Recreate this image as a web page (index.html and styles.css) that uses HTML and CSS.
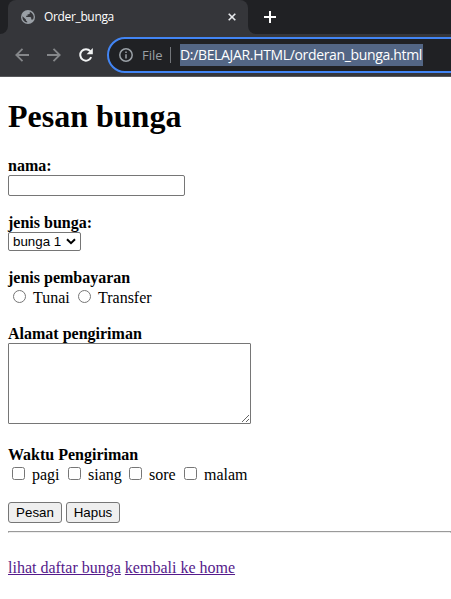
FILE: index.html
```
<!DOCTYPE html>
<html lang="id">
<head>
<meta charset="utf-8">
<title>Order_bunga</title>
<link rel="stylesheet" href="styles.css">
</head>
<body>
<header class="browser">
  <div class="tabs">
    <div class="tab-edge"></div>
    <div class="tab">
      <svg class="globe" width="14" height="14" viewBox="0 0 14 14"><circle cx="7" cy="7" r="7" fill="#9aa0a6"/><path d="M1.5 6.2 L4.9 9.4 V10.4 L6.2 11.4 V12.6 A5.6 5.6 0 0 1 1.5 6.2Z M8.8 1.7 A5.6 5.6 0 0 1 12 9.6 L10.8 9.4 H10.2 V7.8 L9.4 7 H5.2 V5.7 H6.6 V4.3 H8 L8.8 3.5Z" fill="#35363a"/></svg>
      <span class="tab-title">Order_bunga</span>
      <svg class="close" width="8" height="8" viewBox="0 0 8 8"><path d="M.7 .7 7.3 7.3M7.3 .7 .7 7.3" stroke="#e8eaed" stroke-width="1.6"/></svg>
    </div>
    <div class="newtab"><svg width="12" height="12" viewBox="0 0 12 12"><path d="M6 0V12M0 6H12" stroke="#fff" stroke-width="2"/></svg></div>
  </div>
  <div class="toolbar">
    <svg class="nav back" width="14" height="14" viewBox="0 0 14 14"><path d="M14 7H1.5M7.5 .8 1.3 7l6.2 6.2" fill="none" stroke="#85878a" stroke-width="1.8"/></svg>
    <svg class="nav forward" width="14" height="14" viewBox="0 0 14 14"><path d="M0 7H12.5M6.5 .8 12.7 7l-6.2 6.2" fill="none" stroke="#85878a" stroke-width="1.8"/></svg>
    <svg class="nav reload" width="14" height="14" viewBox="0 0 14 14"><path d="M12.2 9.2A5.7 5.7 0 1 1 11.3 3.2" fill="none" stroke="#f1f3f4" stroke-width="2"/><path d="M13.8 0V6.2H7.6Z" fill="#f1f3f4"/></svg>
    <div class="address">
      <svg width="14" height="14" viewBox="0 0 14 14"><circle cx="7" cy="7" r="6.2" fill="none" stroke="#9aa0a6" stroke-width="1.5"/><path d="M7 6.2V10.4M7 3.5V5" stroke="#9aa0a6" stroke-width="1.5"/></svg>
      <span class="scheme">File</span>
      <span class="divider"></span>
      <span class="url">D:/BELAJAR.HTML/orderan_bunga.html</span>
    </div>
  </div>
</header>
<main>
  <h1>Pesan bunga</h1>
  <form>
    <div class="field name">
      <label for="nama">nama:</label>
      <input id="nama" class="text" type="text">
    </div>
    <div class="field kind">
      <label for="jenis">jenis bunga:</label>
      <div class="select-wrap">
        <select id="jenis"><option>bunga 1</option></select>
        <svg class="chevron" width="10" height="7" viewBox="0 0 10 7"><path d="M1 1.2 5 5.2 9 1.2" fill="none" stroke="#000" stroke-width="2"/></svg>
      </div>
    </div>
    <div class="field payment">
      <label>jenis pembayaran</label>
      <div class="options">
        <input type="radio" name="bayar"><span class="o-tunai">Tunai</span>
        <input type="radio" name="bayar"><span>Transfer</span>
      </div>
    </div>
    <div class="field location">
      <label for="alamat">Alamat pengiriman</label>
      <textarea id="alamat"></textarea>
    </div>
    <div class="field time">
      <label>Waktu Pengiriman</label>
      <div class="options checks">
        <input type="checkbox"><span class="o-pagi">pagi</span>
        <input type="checkbox"><span class="o-siang">siang</span>
        <input type="checkbox"><span class="o-sore">sore</span>
        <input type="checkbox"><span>malam</span>
      </div>
    </div>
    <div class="buttons"><button type="button">Pesan</button><button type="button">Hapus</button></div>
  </form>
  <hr>
  <nav class="links"><a href="#">lihat daftar bunga</a><a href="#">kembali ke home</a></nav>
</main>
</body>
</html>
```
FILE: styles.css
```
* { box-sizing: border-box; }
body { margin: 0; height: 599px; overflow: hidden; background: #fff; color: #000; font: 16px/18px "Liberation Serif", serif; }
svg { display: block; flex: none; }
.browser { height: 77px; background: #35363a; border-bottom: 1px solid #57585b; font-family: "Open Sans", sans-serif; }
.tabs { display: flex; height: 34px; background: #35363a; }
.tab-edge { width: 8px; background: #202124; border-bottom-right-radius: 8px; }
.tab { display: flex; align-items: center; width: 240px; padding: 0 12px 0 13px; background: linear-gradient(#202124, #202124) 0 0 / 100% 8px no-repeat, #35363a; position: relative; isolation: isolate; }
.tab::before { content: ""; position: absolute; inset: 0; z-index: -1; border-radius: 8px 8px 0 0; background: #35363a; }
.tab-title { margin-left: 9px; color: #fff; font-size: 12px; white-space: nowrap; letter-spacing: -.35px; }
.close { margin-left: auto; }
.newtab { flex: 1; padding: 11px 0 0 16px; background: #202124; border-bottom-left-radius: 8px; }
.toolbar { display: flex; align-items: center; height: 42px; padding-left: 15px; overflow: hidden; }
.nav { margin-right: 18px; }
.reload { margin-right: 14px; }
.address { display: flex; align-items: center; flex: none; width: 370px; height: 36px; border: 2px solid #4285f4; border-radius: 18px; background: #202124; padding-left: 10px; }
.scheme { width: 20px; margin-left: 9px; color: #9aa0a6; font-size: 13px; white-space: nowrap; }
.divider { width: 1px; height: 16px; margin: 0 9px 0 8px; background: #73767a; }
.url { width: 243px; height: 22px; line-height: 21px; background: #536685; color: #fff; font-size: 14px; letter-spacing: -.34px; white-space: nowrap; }
main { padding: 22px 0 0 8px; }
h1 { height: 58px; margin: 0; font-size: 32px; line-height: 34px; white-space: nowrap; }
.field { display: flex; flex-direction: column; align-items: flex-start; }
.field > label { height: 18px; font-weight: bold; white-space: nowrap; }
.name { height: 57px; }
.kind { height: 55px; }
.payment { height: 56px; }
.location { height: 120px; }
.time { height: 57px; }
.time > label { line-height: 20px; }
.text { width: 177px; height: 21px; margin: 0; border: 1px solid #767676; border-radius: 2px; }
.select-wrap { position: relative; height: 19px; }
select { display: block; appearance: none; width: 73px; height: 19px; margin: 0; padding: 0 4px; border: 1px solid #767676; border-radius: 2px; background: #fff; color: #000; font: 13.333px "Liberation Sans", sans-serif; }
.chevron { position: absolute; right: 5px; top: 6px; }
.options { display: flex; height: 22px; line-height: 22px; align-items: flex-start; padding-left: 5px; white-space: nowrap; }
.options input { flex: none; width: 13px; height: 13px; margin: 3px 7px 0 0; }
.options.checks { height: 24px; line-height: 24px; padding-left: 4px; }
.checks input { margin-top: 4px; }
.o-tunai { width: 45px; }
.o-pagi { width: 36px; }
.o-siang { width: 41px; }
.o-sore { width: 35px; }
textarea { width: 243px; height: 81px; margin: 0; border: 1px solid #767676; border-radius: 1px; resize: both; }
.buttons { display: flex; gap: 4px; height: 21px; }
button { width: 54px; height: 21px; padding: 0; border: 1px solid #767676; border-radius: 3px; background: #efefef; color: #000; font: 13.333px "Liberation Sans", sans-serif; }
hr { height: 2px; margin: 8px 0 26px; border: 1px solid #9a9a9a; border-bottom-color: #eee; }
.links { display: flex; gap: 4px; white-space: nowrap; }
.links a { color: #551a8b; }
```
